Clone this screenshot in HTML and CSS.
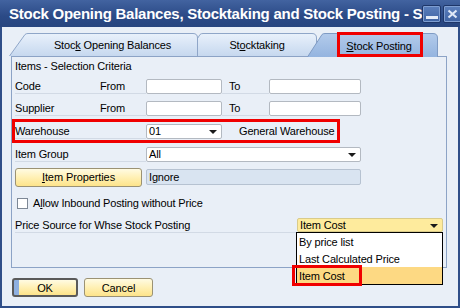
FILE: index.html
```html
<!DOCTYPE html>
<html>
<head>
    <title>Stock Opening Balances, Stocktaking and Stock Posting</title>
    <meta charset="UTF-8">
    <link rel="stylesheet" href="styles.css">
</head>
<body>
    <div class="window">
        <div class="titlebar">
            <span class="title">Stock Opening Balances, Stocktaking and Stock Posting - S</span>
            <div class="caption-btns">
                <span class="cap-btn cap-min"><span class="min-bar"></span></span>
                <span class="cap-btn cap-close">
                    <svg width="11" height="10" viewBox="0 0 11 10"><path d="M1.5 1.5 L9.5 8.5 M9.5 1.5 L1.5 8.5" stroke="#dfe8f7" stroke-width="2.2" fill="none"/></svg>
                </span>
            </div>
        </div>

        <div class="body">
            <div class="tabs">
                <div class="tab tab-1">
                    <svg class="tab-bg" width="189" height="23" viewBox="0 0 189 23"><defs><linearGradient id="gIn" x1="0" y1="0" x2="0" y2="1"><stop offset="0" stop-color="#e9f1fb"/><stop offset="1" stop-color="#c6d8ef"/></linearGradient></defs><path d="M0.5 23 L16 1.5 Q17 0.5 19 0.5 L184 0.5 Q188.5 0.5 188.5 5 L188.5 23" fill="url(#gIn)" stroke="#8fa6c8"/></svg>
                    <span class="tab-label">Stoc<u>k</u> Opening Balances</span>
                </div>
                <div class="tab tab-2">
                    <svg class="tab-bg" width="132" height="23" viewBox="0 0 132 23"><defs><linearGradient id="gIn2" x1="0" y1="0" x2="0" y2="1"><stop offset="0" stop-color="#e9f1fb"/><stop offset="1" stop-color="#c6d8ef"/></linearGradient></defs><path d="M0.5 23 L14 1.5 Q15 0.5 17 0.5 L126 0.5 Q130.5 0.5 130.5 5 L130.5 23" fill="url(#gIn2)" stroke="#8fa6c8"/></svg>
                    <span class="tab-label">St<u>o</u>cktaking</span>
                </div>
                <div class="tab tab-3">
                    <svg class="tab-bg" width="132" height="24" viewBox="0 0 132 24"><defs><linearGradient id="gAct" x1="0" y1="0" x2="0" y2="1"><stop offset="0" stop-color="#b3cbeb"/><stop offset="1" stop-color="#94b4df"/></linearGradient></defs><path d="M0.5 24 L15 1.5 Q16 0.5 18 0.5 L126 0.5 Q130.5 0.5 130.5 5 L130.5 24" fill="url(#gAct)" stroke="#7f9bc4"/></svg>
                    <span class="tab-label"><u>S</u>tock Posting</span>
                    <span class="mark mark-tab"></span>
                </div>
            </div>

            <div class="panel">
                <div class="row row-head">
                    <span class="heading">Items - Selection Criteria</span>
                </div>
                <div class="row row-22">
                    <span class="lbl lbl-main">Code</span>
                    <span class="lbl lbl-from">From</span>
                    <span class="field field-s"></span>
                    <span class="lbl lbl-to">To</span>
                    <span class="field field-m"></span>
                </div>
                <div class="row row-22">
                    <span class="lbl lbl-main">Supplier</span>
                    <span class="lbl lbl-from">From</span>
                    <span class="field field-s"></span>
                    <span class="lbl lbl-to">To</span>
                    <span class="field field-m"></span>
                </div>
                <div class="row row-wh">
                    <span class="lbl lbl-wide">Warehouse</span>
                    <span class="field field-s select">01<span class="arrow"></span></span>
                    <span class="wh-name">General Warehouse</span>
                </div>
                <div class="row row-22">
                    <span class="lbl lbl-wide">Item Group</span>
                    <span class="field field-l select">All<span class="arrow"></span></span>
                </div>
                <div class="row row-24">
                    <button class="btn btn-props"><u>I</u>tem Properties</button>
                    <span class="field field-l field-ro">Ignore</span>
                </div>
                <div class="row row-check">
                    <span class="checkbox"></span>
                    <span class="check-lbl">A<u>l</u>low Inbound Posting without Price</span>
                </div>
                <div class="row row-price">
                    <span class="lbl lbl-price">Price Source for Whse Stock Posting</span>
                    <span class="field field-price select">Item Cost<span class="arrow"></span>
                        <span class="droplist">
                            <span class="drop-item">By price list</span>
                            <span class="drop-item">Last Calculated Price</span>
                            <span class="drop-item drop-sel">Item Cost<span class="mark mark-drop"></span></span>
                        </span>
                    </span>
                </div>
            </div>

            <div class="footer">
                <button class="btn btn-ok">OK</button>
                <button class="btn btn-cancel">Cancel</button>
            </div>
        </div>
    </div>
</body>
</html>
```

FILE: styles.css
```css
body {
    margin: 0;
    font-family: 'Liberation Sans', Arial, sans-serif;
    font-size: 11px;
    letter-spacing: -0.15px;
    color: #000;
    background: #e9eff7;
}
.window {
    width: 460px;
    height: 308px;
    display: flex;
    flex-direction: column;
}
.titlebar {
    height: 27px;
    display: flex;
    align-items: center;
    justify-content: space-between;
    padding: 0 3px 0 9px;
    background: linear-gradient(#4263a0, #2b4a86 60%, #27457f);
    box-sizing: border-box;
}
.title {
    color: #fff;
    font-weight: bold;
    font-size: 15px;
    white-space: nowrap;
    letter-spacing: -0.25px;
}
.caption-btns {
    display: flex;
    gap: 2px;
    flex-shrink: 0;
}
.cap-btn {
    width: 19px;
    height: 18px;
    box-sizing: border-box;
    border: 1px solid #1e3669;
    border-radius: 2px;
    background: linear-gradient(#5b7fbd, #3f63a3);
    box-shadow: inset 0 0 0 1px #7e9dd0;
    display: flex;
    align-items: center;
    justify-content: center;
}
.cap-min {
    align-items: flex-end;
}
.min-bar {
    width: 12px;
    height: 3px;
    background: #e4ecf9;
    margin-bottom: 3px;
}
.body {
    flex: 1;
    border: 2px solid #2f4e88;
    border-top: none;
    display: flex;
    flex-direction: column;
    background: #e9eff7;
}

/* tabs */
.tabs {
    display: flex;
    height: 23px;
    margin: 6px 0 0 7px;
    position: relative;
    z-index: 1;
}
.tab {
    position: relative;
    height: 23px;
    display: flex;
    align-items: center;
    justify-content: center;
}
.tab-bg {
    position: absolute;
    left: 0;
    top: 0;
}
.tab-label {
    position: relative;
    font-size: 11px;
    padding-top: 1px;
}
.tab-1 {
    width: 189px;
    padding-left: 18px;
    box-sizing: border-box;
    z-index: 2;
}
.tab-2 {
    width: 132px;
    margin-left: -12px;
    padding-left: 10px;
    box-sizing: border-box;
    z-index: 1;
}
.tab-3 {
    width: 132px;
    height: 24px;
    margin-left: -11px;
    padding-left: 12px;
    box-sizing: border-box;
    z-index: 3;
}
.mark {
    position: absolute;
    border: 3px solid #f00000;
    box-sizing: border-box;
}
.mark-tab {
    left: 30px;
    top: -1px;
    width: 86px;
    height: 25px;
}

/* panel */
.panel {
    margin-left: 9px;
    width: 436px;
    height: 212px;
    border: 1px solid #8ca3c6;
    box-sizing: border-box;
    background: #e9eff7;
}
.row {
    display: flex;
    align-items: center;
    padding-left: 3px;
}
.row > * {
    flex-shrink: 0;
}
.row-head {
    height: 18px;
}
.row-22 {
    height: 22px;
}
.row-24 {
    height: 24px;
}
.row-check {
    height: 28px;
}
.row-price {
    height: 16px;
}
.row-wh {
    height: 24px;
    width: 328px;
    padding-left: 0;
    border: 3px solid #f00000;
    box-sizing: border-box;
}
.lbl {
    height: 15px;
    display: flex;
    align-items: center;
    border-bottom: 1px solid #d2dae5;
    box-sizing: border-box;
    white-space: nowrap;
}
.lbl-main {
    width: 85px;
}
.lbl-from {
    width: 46px;
}
.lbl-to {
    width: 47px;
    padding-left: 7px;
    box-sizing: border-box;
}
.lbl-wide {
    width: 131px;
}
.lbl-price {
    width: 282px;
}
.field {
    height: 15px;
    background: #fff;
    border: 1px solid #b3b9c1;
    border-radius: 2px;
    box-sizing: border-box;
    display: flex;
    align-items: center;
    padding-left: 2px;
    position: relative;
    white-space: nowrap;
}
.field-s {
    width: 76px;
}
.field-m {
    width: 92px;
}
.field-l {
    width: 215px;
}
.field-ro {
    background: #d9e4f1;
    border-color: #b6c2d1;
    height: 16px;
}
.field-price {
    width: 146px;
    height: 14px;
    background: #feeb9d;
    border-color: #d9cb8a;
}
.arrow {
    position: absolute;
    right: 4px;
    top: 5px;
    width: 0;
    height: 0;
    border-left: 4px solid transparent;
    border-right: 4px solid transparent;
    border-top: 4px solid #1a1a1a;
}
.wh-name {
    margin-left: 17px;
    white-space: nowrap;
}
.btn {
    font-family: 'Liberation Sans', Arial, sans-serif;
    font-size: 11px;
    letter-spacing: -0.1px;
    color: #000;
    height: 19px;
    padding: 0;
    border: 1px solid #9b9274;
    border-radius: 3px;
    background: linear-gradient(#fffbe3, #fff0b4 50%, #fde38a);
    box-sizing: border-box;
}
.btn-props {
    width: 127px;
    margin-right: 4px;
}
.checkbox {
    width: 11px;
    height: 11px;
    margin-left: 2px;
    background: #fff;
    border: 1px solid #7d8896;
    box-sizing: border-box;
}
.check-lbl {
    margin-left: 5px;
}

/* dropdown */
.droplist {
    position: absolute;
    left: -2px;
    top: 13px;
    width: 147px;
    height: 53px;
    background: #fff;
    border: 1px solid #000;
    box-sizing: border-box;
    display: flex;
    flex-direction: column;
    z-index: 5;
}
.drop-item {
    height: 17px;
    display: flex;
    align-items: center;
    padding-left: 2px;
    position: relative;
}
.drop-sel {
    background: #fdd983;
}
.mark-drop {
    left: -5px;
    top: -2px;
    width: 70px;
    height: 21px;
}

/* footer */
.footer {
    display: flex;
    gap: 6px;
    margin: 10px 0 0 10px;
}
.btn-ok {
    width: 66px;
    border: 2px solid #5a5a5a;
    background: linear-gradient(to right, #8fb0e0 0, #8fb0e0 5px, transparent 5px), linear-gradient(#fffbe3, #fff0b4 50%, #fde38a);
}
.btn-cancel {
    width: 69px;
}
```
